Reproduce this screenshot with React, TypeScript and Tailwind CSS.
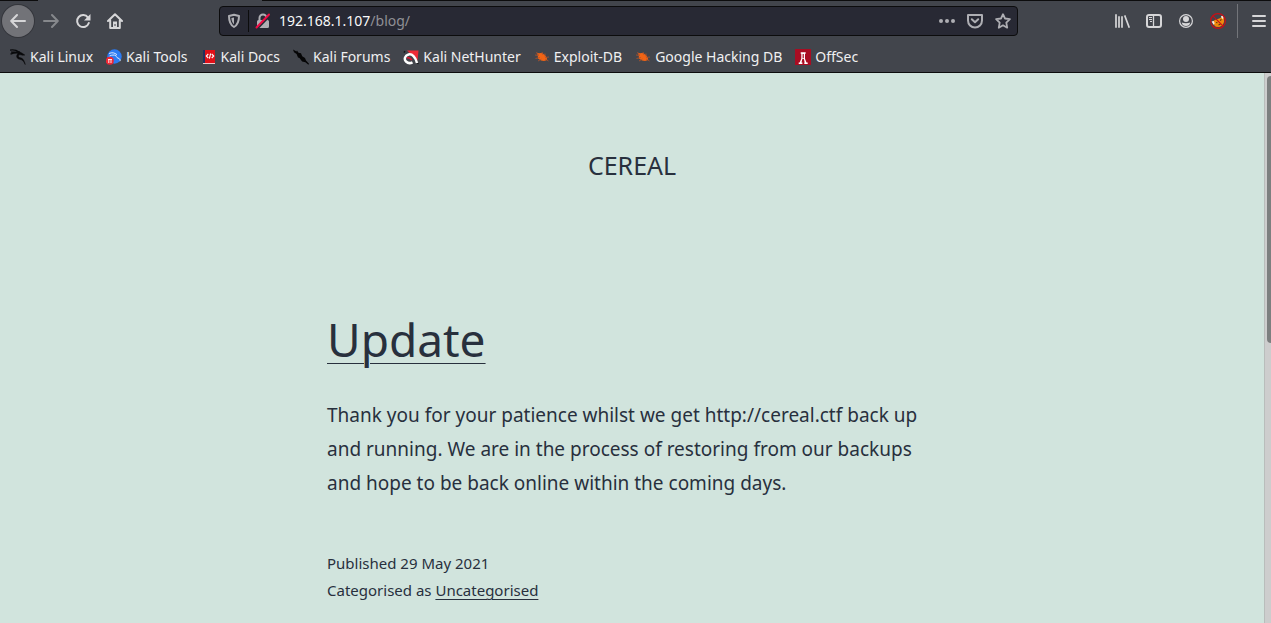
import React from "react";

type IconProps = { children: React.ReactNode; className?: string };

function Icon({ children, className = "" }: IconProps) {
  return (
    <svg viewBox="0 0 16 16" aria-hidden="true" className={`h-4 w-4 shrink-0 ${className}`}>
      {children}
    </svg>
  );
}

const stroke = {
  fill: "none",
  stroke: "currentColor",
  strokeWidth: 2,
  strokeLinecap: "round" as const,
  strokeLinejoin: "round" as const,
};

function ToolButton({ label, className = "", children }: { label: string; className?: string; children: React.ReactNode }) {
  return (
    <button type="button" aria-label={label} className={`flex h-8 w-8 shrink-0 items-center justify-center text-[#d6d6d8] ${className}`}>
      {children}
    </button>
  );
}

function DragonIcon() {
  return (
    <Icon>
      <path d="M0 1.200C3 .6 6.500 1.200 9.500 3.300M.5 5.200C4 3.600 7 3.400 10.200 4.300M1 3.200l7.500-.2" fill="none" stroke="#08090b" strokeWidth="1.300" />
      <path d="M9 2.600l3.200 1.600 2.600 1.900-2.200.1-2.800-.6C8 6.200 7.800 8 9.600 8.600c2.700.7 4.200 1.300 5.600 6.900-1.700-3.600-2.800-4.700-5.400-5.200C6.600 9.700 5.700 7 7.800 4.800z" fill="#08090b" stroke="#08090b" strokeWidth=".5" />
    </Icon>
  );
}

function ToolsIcon() {
  return (
    <Icon>
      <circle cx="8.500" cy="7.500" r="7.200" fill="#2b7bf3" />
      <path d="M3 4.500c3-1.300 5.500-.9 8 1.200M3.500 7c2.500-1.200 4.500-1.200 6.500-.5.300 2 1.500 2.500 3 3 .9.400 1.200 1.500 1.200 2.600" fill="none" stroke="#d9e9ff" strokeWidth="1" />
      <circle cx="3.800" cy="11.800" r="4" fill="#ee2734" />
      <path d="M2 10.500h4M2.800 10.500v3.500M5 10.500v3.500" stroke="#fff" strokeWidth=".9" />
    </Icon>
  );
}

function DocsIcon() {
  return (
    <Icon>
      <path d="M2 1h12v14H2z" fill="#e01018" />
      <path d="M2 1h2v14H2z" fill="#22315e" />
      <path d="M2 14h12v1H2z" fill="#efc7c9" />
      <path d="M7.300 5L5.300 7l2 2M10.700 5l2 2-2 2M9.600 4.500L8.400 9.600" fill="none" stroke="#fff" strokeWidth="1.100" />
    </Icon>
  );
}

function ForumsIcon() {
  return (
    <Icon>
      <path d="M0 .5l3.500 2 .5-1 1.500 2.300L8 4.300l1.200 3L12 9l1 2.600 3 3.100-.6 1-3-2.500-3.300-.8L6.500 9 5 8.400 3.600 5 1 3.300z" fill="#050506" />
    </Icon>
  );
}

function NetHunterIcon() {
  return (
    <Icon>
      <path d="M4 1.500h11.500l-1 10z" fill="#ee2b37" />
      <path d="M.8 3.500l1.400-1.300M14 14l1.500.8" stroke="#16171a" strokeWidth="1.300" />
      <path d="M14 14C12.500 8 9 4.500 5.500 5.500 1.800 6.500.8 10.500 3 12.500c2 1.900 5 1.600 6.500.8" fill="none" stroke="#fff" strokeWidth="2.500" />
      <path d="M4 9c1.500-1.200 3-.2 4.800 2" fill="none" stroke="#da1530" strokeWidth="1.700" />
    </Icon>
  );
}

function BugIcon() {
  return (
    <Icon>
      <path d="M3 3.800l2.500.5 1-.2 2 .2 2.300 1.800 1.500 1.900 1 2.500-1.500 1-1.800.6-3-.5L4 9.500 3.800 7z" fill="#f26414" />
      <path d="M1 6l4 .5M1.500 9.500L6 8.500M4 12l3.500-2M8 3l1 3M11 4.500v3M11 8.500l4-.5M11 10l3.500 2M2 3.500l3 2" stroke="#b65328" strokeWidth=".8" />
    </Icon>
  );
}

function OffSecIcon() {
  return (
    <Icon>
      <path d="M0 0h16v16H0z" fill="#a90c22" />
      <path d="M5.700 3.300h5v1.500H10v5l1.500 3.600h1.200V15H9.300v-1.600h.4L8.800 9.800H7.400l-.9 3.600h.9V15H3.700v-1.600h1l1.600-3.800V4.800h-.6z" fill="#fff" />
      <path d="M7.600 5h1.200v4H7.600z" fill="#a90c22" />
    </Icon>
  );
}

const bookmarks = [
  { name: "Kali Linux", icon: <DragonIcon /> },
  { name: "Kali Tools", icon: <ToolsIcon /> },
  { name: "Kali Docs", icon: <DocsIcon /> },
  { name: "Kali Forums", icon: <ForumsIcon /> },
  { name: "Kali NetHunter", icon: <NetHunterIcon /> },
  { name: "Exploit-DB", icon: <BugIcon /> },
  { name: "Google Hacking DB", icon: <BugIcon /> },
  { name: "OffSec", icon: <OffSecIcon /> },
];

function AddressBar() {
  return (
    <div className="mx-[88px] flex h-[30px] min-w-0 flex-1 items-center rounded-[4px] border border-[#0c0c0d] bg-[#282934] text-[#aeaeb3]">
      <button type="button" aria-label="Tracking protection" className="flex h-full w-7 shrink-0 items-center justify-center">
        <Icon>
          <path d="M8 1.800l5 1.200c0 5.600-1.500 9-5 11-3.500-2-5-5.400-5-11z" {...stroke} />
          <path d="M8 4.500v6.800C6.300 9.800 5.500 7.800 5.400 5.100z" fill="currentColor" />
        </Icon>
      </button>
      <span className="h-[22px] w-px bg-[#0c0c0d]" />
      <button type="button" aria-label="Connection not secure" className="flex h-full w-7 shrink-0 items-center justify-center">
        <Icon>
          <path d="M4.500 7V5a3.500 3.500 0 0 1 7 0v2" {...stroke} />
          <path d="M3.500 7h9A1.500 1.500 0 0 1 14 8.500v5a1.500 1.500 0 0 1-1.500 1.500h-9A1.500 1.500 0 0 1 2 13.500v-5A1.500 1.500 0 0 1 3.500 7z" fill="currentColor" />
          <path d="M2.500 15.500l13-13.500" stroke="#282934" strokeWidth="2" />
          <path d="M1.500 14.500L14 1.500" stroke="#f00c45" strokeWidth="2" strokeLinecap="round" />
        </Icon>
      </button>
      <a href="/blog/" className="min-w-0 flex-1 truncate pl-[2px] text-[14px] leading-6 text-[#909096]">
        <span className="text-[#f9f9fa]">192.168.1.107</span>/blog/
      </a>
      <div className="flex shrink-0 items-center gap-3 pr-[6px]">
        <button type="button" aria-label="Page actions">
          <Icon>
            <circle cx="2" cy="8" r="2" fill="currentColor" />
            <circle cx="8" cy="8" r="2" fill="currentColor" />
            <circle cx="14" cy="8" r="2" fill="currentColor" />
          </Icon>
        </button>
        <button type="button" aria-label="Save to Pocket">
          <Icon>
            <path d="M1 2h14v5.500a7 7 0 0 1-14 0z" {...stroke} />
            <path d="M4.800 6.300L8 9.300l3.200-3" {...stroke} />
          </Icon>
        </button>
        <button type="button" aria-label="Bookmark this page">
          <Icon>
            <path d="M8 1.200l2 4.300 4.900.6-3.600 3.500.9 5.100L8 12.300l-4.200 2.400.9-5.100L1.100 6.100 6 5.500z" {...stroke} strokeWidth={1.800} />
          </Icon>
        </button>
      </div>
    </div>
  );
}

function FoxIcon() {
  return (
    <Icon>
      <path d="M2.500 8.500l2-1.300 1.500-.6 2.500-.8 2-.8 2-2.200 1.300 2.500.3 3.500-1.500 3.500-3.300 1.700-3.500-.2-2-2z" fill="#f28b0c" />
      <path d="M1.500 8.600l2.200-.6 1 2.300-1 1.500zM11 3.500l1.700-1.500.9 3-1.400 1z" fill="#f4eee5" />
      <path d="M6 9.500l1.500.3M10 7.500l1.500-1M8.500 12l2-1" stroke="#633912" strokeWidth="1.100" />
      <circle cx="8" cy="8" r="7.400" fill="none" stroke="#c80f16" strokeWidth="1.200" />
      <path d="M2.800 2.800l10.400 10.400" stroke="#c80f16" strokeWidth="1.200" />
    </Icon>
  );
}

function BrowserToolbar() {
  return (
    <header className="shrink-0 border-b border-[#0c0c0d] bg-[#42454c] font-['Noto_Sans',sans-serif]">
      <div className="flex h-px justify-between bg-[#0c0c0d]">
        <span className="ml-[38px] w-56 bg-[#42454c]" />
      </div>
      <nav aria-label="Navigation" className="flex h-10 items-center pl-[2px]">
        <ToolButton label="Back" className="rounded-full bg-[#727378] ring-1 ring-[#34363c]">
          <Icon><path d="M15 8H1.500M7 2L1.200 8 7 14" {...stroke} /></Icon>
        </ToolButton>
        <ToolButton label="Forward" className="ml-px text-[#86888c]!">
          <Icon><path d="M1 8h13.500M9 2l5.800 6L9 14" {...stroke} /></Icon>
        </ToolButton>
        <ToolButton label="Reload">
          <Icon>
            <path d="M13 4.600A6 6 0 1 0 13.800 10" {...stroke} />
            <path d="M15.500 1v6.500H9z" fill="currentColor" />
          </Icon>
        </ToolButton>
        <ToolButton label="Home">
          <Icon>
            <path d="M1 8l7-6.800L15 8M3.200 7.500V15h9.600V7.500" {...stroke} />
            <path d="M6 8.500h4v6H6z" fill="currentColor" />
            <path d="M7.500 11h1v2h-1z" fill="#42454c" />
          </Icon>
        </ToolButton>
        <AddressBar />
        <ToolButton label="Library">
          <Icon><path d="M2 2v12M5 4v10M8 4v10M11 3.200L15 14" {...stroke} strokeLinecap="square" strokeWidth={1.700} /></Icon>
        </ToolButton>
        <ToolButton label="Sidebars">
          <Icon>
            <rect x="1" y="2" width="14" height="12" rx="2" {...stroke} />
            <path d="M7.500 2v12" stroke="currentColor" strokeWidth="1.300" />
            <path d="M3 4.500h3M3 6.500h3M4 8.500h2" stroke="currentColor" strokeWidth="1" />
          </Icon>
        </ToolButton>
        <ToolButton label="Account">
          <Icon>
            <circle cx="8" cy="8" r="6.400" fill="none" stroke="currentColor" strokeWidth="1.200" />
            <circle cx="8" cy="6" r="3" fill="currentColor" />
            <path d="M3.800 9.500c2.300 1 6.100 1 8.400 0-.2 2.400-2 3.500-4.200 3.500s-4-1.100-4.200-3.500z" fill="currentColor" />
          </Icon>
        </ToolButton>
        <ToolButton label="Proxy disabled"><FoxIcon /></ToolButton>
        <span className="ml-[3px] h-[34px] w-px bg-[#73757a]" />
        <button type="button" aria-label="Open menu" className="flex h-8 w-[33px] shrink-0 items-center justify-end pr-1 text-[#d6d6d8]">
          <Icon><path d="M2 3h12M2 8h12M2 13h12" {...stroke} /></Icon>
        </button>
      </nav>
      <nav aria-label="Bookmarks" className="flex h-[31px] items-center gap-[13px] overflow-hidden pl-[10px] text-[14px] text-[#f0f0f1]">
        {bookmarks.map(({ name, icon }) => (
          <a key={name} href="#" className="flex shrink-0 items-center gap-1 whitespace-nowrap leading-5">
            {icon}
            {name}
          </a>
        ))}
      </nav>
    </header>
  );
}

export default function App() {
  return (
    <div className="flex h-screen flex-col overflow-hidden">
      <BrowserToolbar />
      <div className="flex min-h-0 flex-1 bg-[#d1e4dd]">
        <div className="min-w-0 flex-1 overflow-hidden font-['Noto_Sans',sans-serif] text-[#28303d]">
          <div className="pt-[72px] text-center">
            <h1 className="text-[25px] leading-[40px]">CEREAL</h1>
          </div>
          <main className="mx-auto w-full max-w-[610px] pt-[120px]">
            <article>
              <h2 className="text-[46px] leading-[68px]">
                <a href="#" className="underline decoration-1 underline-offset-[6px]">Update</a>
              </h2>
              <p className="pt-[25px] text-[19px] leading-[34px]">
                Thank you for your patience whilst we get http://cereal.ctf back up and running. We are in the process of restoring from our backups and hope to be back online within the coming days.
              </p>
              <footer className="pt-[50px] text-[15px] leading-[27px]">
                <p>Published <time dateTime="2021-05-29">29 May 2021</time></p>
                <p>
                  Categorised as{" "}
                  <a href="#" className="underline decoration-1 underline-offset-[3px]">Uncategorised</a>
                </p>
              </footer>
            </article>
          </main>
        </div>
        <div className="flex w-[7px] shrink-0 justify-end border-l border-[#b9bdbb] bg-[#cdcdcd] pt-[3px]">
          <div className="h-[267px] w-1 rounded-l-[4px] bg-[#7c7f7f]" />
        </div>
      </div>
    </div>
  );
}
